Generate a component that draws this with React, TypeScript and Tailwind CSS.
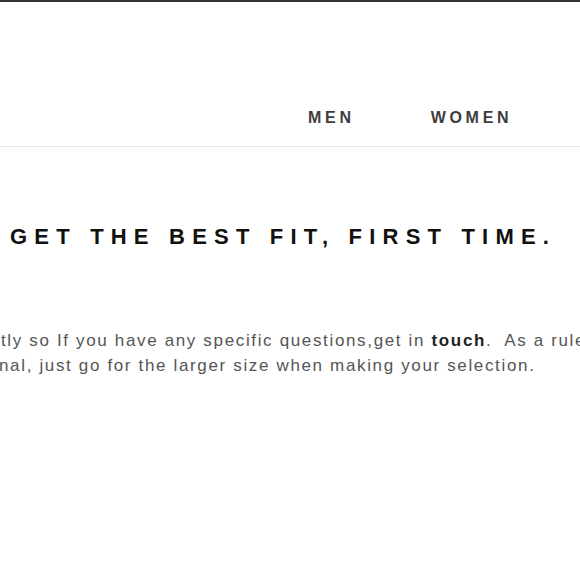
export default function App() {
  return (
    <div className="min-h-[580px] w-[580px] overflow-hidden bg-white font-['Liberation_Sans',Arial,sans-serif]">
      <header className="flex h-[147px] items-end border-t-2 border-b border-t-[#333] border-b-[#e6e6e6] pb-[20px]">
        <nav className="flex gap-[76px] pl-[308px] text-[16px] font-bold uppercase leading-none tracking-[3.7px] text-[#3d3d3d]">
          <a href="#">Men</a>
          <a href="#">Women</a>
        </nav>
      </header>

      <h1 className="mt-[79px] pl-[10px] text-[22px] font-bold uppercase leading-none tracking-[7.2px] text-[#111]">
        Get the best fit, first time.
      </h1>

      <div className="mt-[80px] overflow-hidden text-[17px] leading-[25px] tracking-[1.65px] text-[#555]">
        <p className="whitespace-nowrap pl-[1px]">
          tly so If you have any specific questions,get in{" "}
          <a href="#" className="font-bold text-[#222]">touch</a>.&nbsp; As a rule of thumb, if you are between sizes
        </p>
        <p className="-ml-[1px] whitespace-nowrap">
          nal, just go for the larger size when making your selection.
        </p>
      </div>
    </div>
  );
}
